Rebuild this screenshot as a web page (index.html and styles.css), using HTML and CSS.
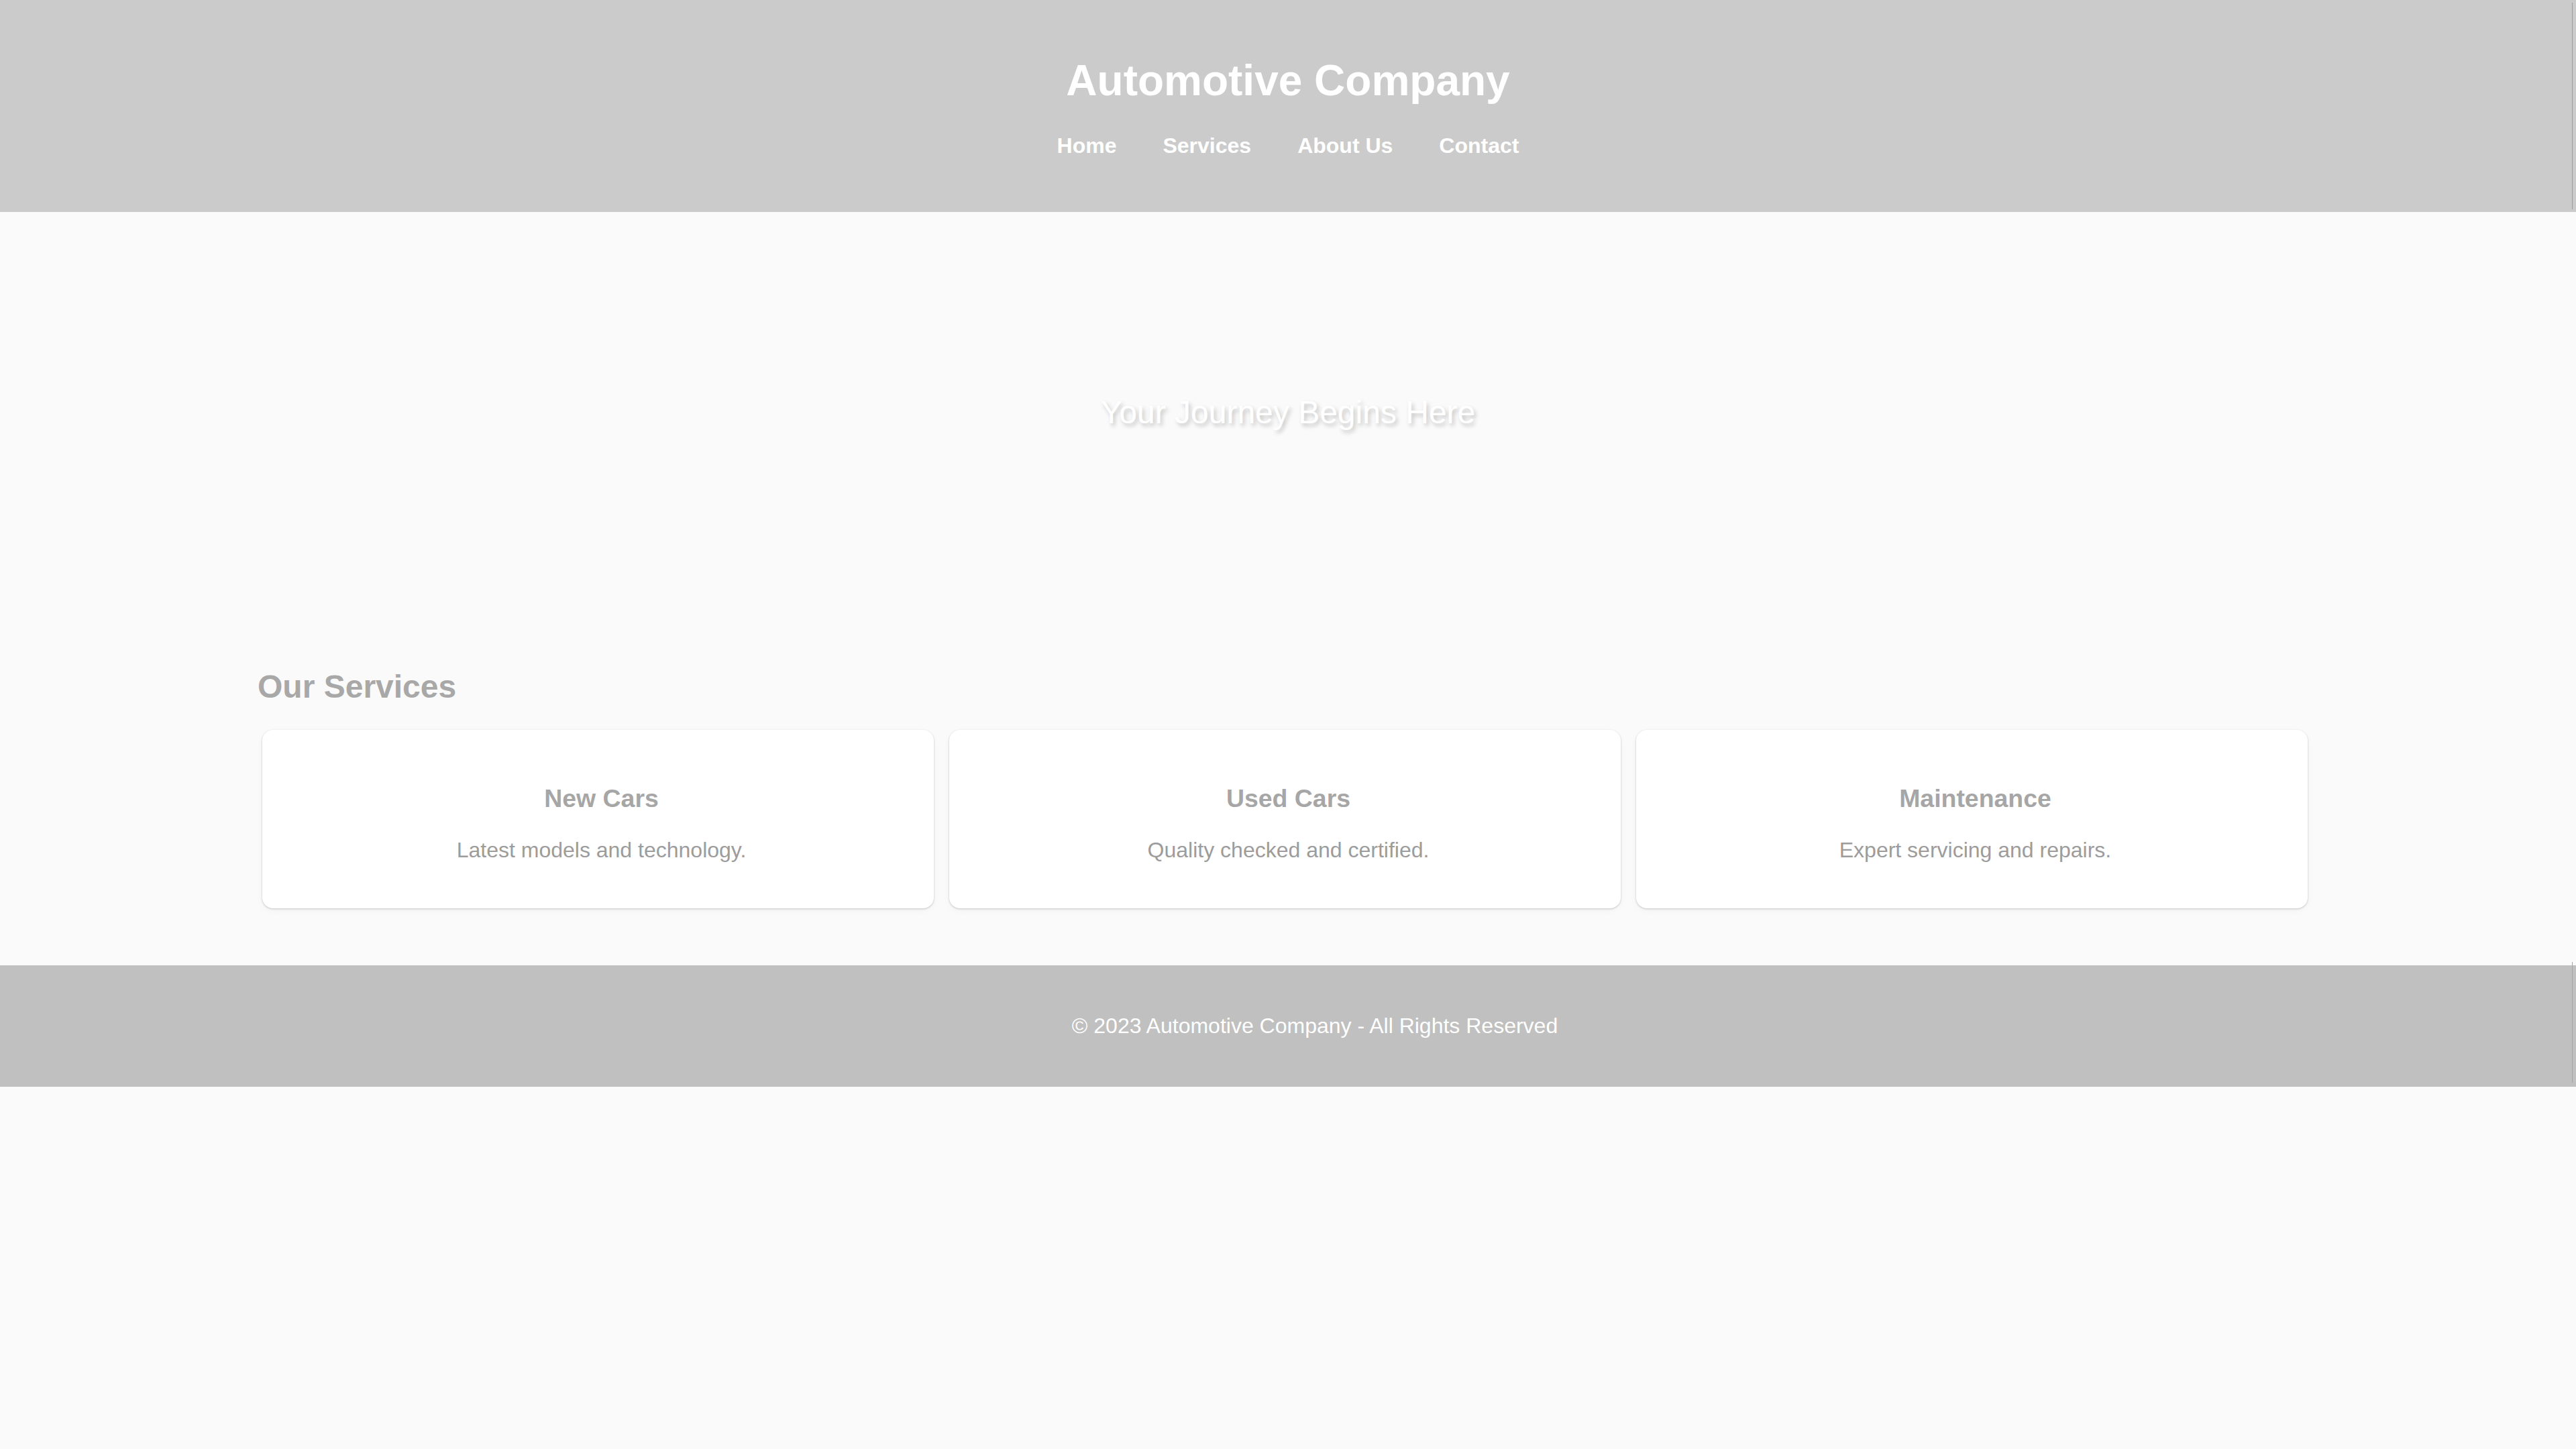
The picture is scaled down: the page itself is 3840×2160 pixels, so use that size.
FILE: index.html
```html
<!DOCTYPE html>
<html lang="en">
<head>
<meta charset="utf-8">
<title>Automotive Company</title>
<link rel="stylesheet" href="styles.css">
</head>
<body>
<header class="site-header">
  <h1 class="site-title">Automotive Company</h1>
  <nav class="main-nav">
    <a href="#" class="nav-link">Home</a>
    <a href="#" class="nav-link">Services</a>
    <a href="#" class="nav-link">About Us</a>
    <a href="#" class="nav-link">Contact</a>
  </nav>
</header>
<section class="hero">
  <h2 class="hero-text">Your Journey Begins Here</h2>
</section>
<section class="services">
  <h2 class="services-title">Our Services</h2>
  <div class="cards">
    <div class="card">
      <h3 class="card-title">New Cars</h3>
      <p class="card-text">Latest models and technology.</p>
    </div>
    <div class="card">
      <h3 class="card-title">Used Cars</h3>
      <p class="card-text">Quality checked and certified.</p>
    </div>
    <div class="card">
      <h3 class="card-title">Maintenance</h3>
      <p class="card-text">Expert servicing and repairs.</p>
    </div>
  </div>
</section>
<footer class="site-footer">
  <p class="footer-text">&copy; 2023 Automotive Company - All Rights Reserved</p>
</footer>
</body>
</html>
```
FILE: styles.css
```css
html, body {
  margin: 0;
  padding: 0;
}
body {
  background: #fafafa;
  font-family: "Liberation Sans", Arial, sans-serif;
  font-size: 32px;
  color: #9a9a9a;
}
.site-header {
  position: relative;
  background: #cbcbcb;
  padding: 83px 0 80px;
  text-align: center;
  color: #ffffff;
}
.site-header::after {
  content: "";
  position: absolute;
  right: 5px;
  top: 4px;
  bottom: 4px;
  width: 1px;
  background: #9c9c9c;
}
.site-title {
  margin: 0 0 42px;
  font-size: 64px;
  font-weight: bold;
  line-height: normal;
}
.main-nav {
  display: flex;
  justify-content: center;
  gap: 69px;
}
.nav-link {
  color: #ffffff;
  text-decoration: none;
  font-weight: bold;
  font-size: 32px;
}
.hero {
  height: 596px;
  display: flex;
  align-items: center;
  justify-content: center;
}
.hero-text {
  margin: 0;
  font-size: 48px;
  font-weight: normal;
  color: #ffffff;
  text-shadow: 3px 4px 6px rgba(0, 0, 0, 0.22);
}
.services {
  max-width: 3072px;
  margin: 0 auto;
  padding: 84px 0 85px;
}
.services-title {
  margin: 0 0 37px;
  font-size: 48px;
  font-weight: bold;
  color: #a8a8a8;
}
.cards {
  display: grid;
  grid-template-columns: repeat(3, 1001px);
  gap: 23px;
  padding-left: 7px;
}
.card {
  background: #ffffff;
  border-radius: 16px;
  padding: 44px 35px 36px 45px;
  text-align: center;
  box-shadow: 0 1px 3px rgba(0, 0, 0, 0.2), 0 4px 12px rgba(0, 0, 0, 0.03);
}
.card-title {
  margin: 37px 0 37px;
  font-size: 37.44px;
  font-weight: bold;
  color: #a6a6a6;
}
.card-text {
  margin: 0 0 32px;
  font-size: 32px;
  color: #9c9c9c;
}
.site-footer {
  position: relative;
  background: #c0c0c0;
  padding: 40px 0;
  text-align: center;
  color: #ffffff;
}
.site-footer::after {
  content: "";
  position: absolute;
  right: 5px;
  top: -5px;
  bottom: 6px;
  width: 1px;
  background: #a4a4a4;
}
.footer-text {
  margin: 32px 0;
  padding-left: 80px;
  font-size: 32px;
}
```
